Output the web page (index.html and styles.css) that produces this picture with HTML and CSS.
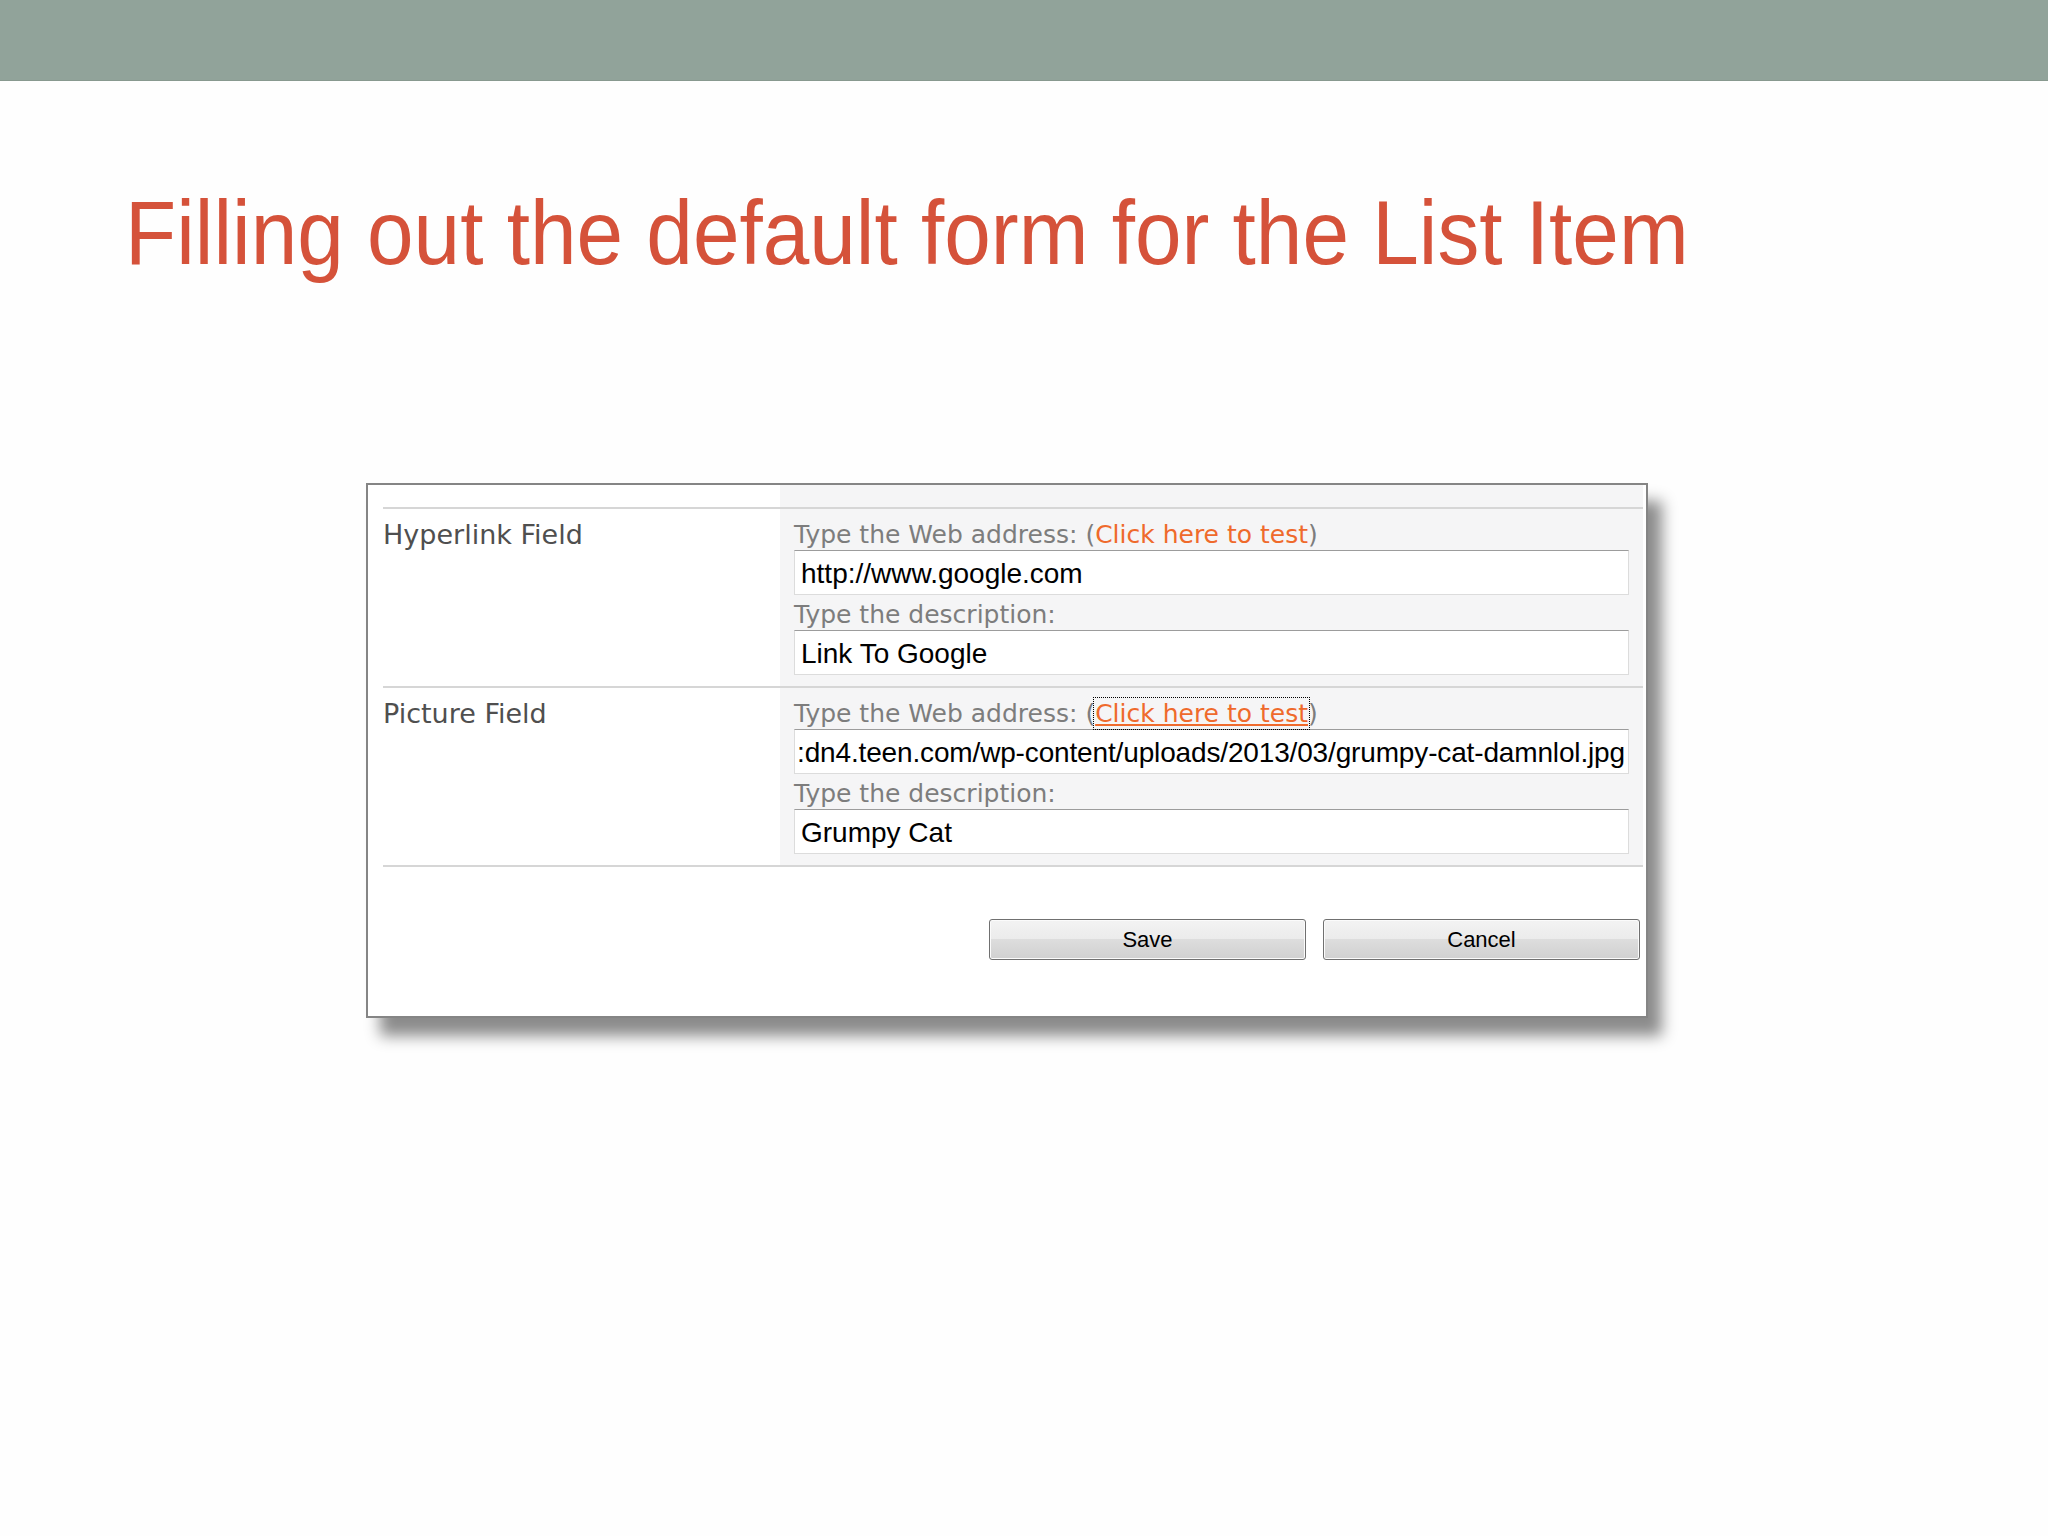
FILE: index.html
```html
<!DOCTYPE html>
<html lang="en">
<head>
   <meta charset="UTF-8">
   <title>Filling out the default form for the List Item</title>
   <link rel="stylesheet" href="styles.css">
</head>
<body>
   <div class="topbar"></div>
   <h1 class="title">Filling out the default form for the List Item</h1>

   <div class="shot">
      <div class="form">
         <div class="form-head">
            <div></div>
            <div class="field-body"></div>
         </div>
         <div class="field-row">
            <div class="field-name">Hyperlink Field</div>
            <div class="field-body">
               <div class="hint">Type the Web address: (<a class="test-link">Click here to test</a>)</div>
               <input class="text-box" type="text" value="http://www.google.com">
               <div class="hint second">Type the description:</div>
               <input class="text-box" type="text" value="Link To Google">
            </div>
         </div>
         <div class="field-row">
            <div class="field-name">Picture Field</div>
            <div class="field-body">
               <div class="hint">Type the Web address: (<a class="test-link focused">Click here to test</a>)</div>
               <input class="text-box scrolled" type="text" value=":dn4.teen.com/wp-content/uploads/2013/03/grumpy-cat-damnlol.jpg">
               <div class="hint second">Type the description:</div>
               <input class="text-box" type="text" value="Grumpy Cat">
            </div>
         </div>
      </div>
      <div class="actions">
         <button>Save</button>
         <button>Cancel</button>
      </div>
   </div>
</body>
</html>
```
FILE: styles.css
```css
body {
   margin: 0;
   min-height: 100vh;
   background: #fefefe;
   font-family: "Liberation Sans", Arial, sans-serif;
}
.topbar {
   height: 80px;
   background: #91a39a;
   border-bottom: 1px solid #88998f;
}
.title {
   margin: 106px 0 0;
   padding-left: 136px;
   height: 91px;
   font-size: 91px;
   line-height: 91px;
   font-weight: normal;
   color: #d5523a;
   white-space: nowrap;
   transform: scaleX(0.92);
   transform-origin: left center;
}
.shot {
   width: 1278px;
   margin: 205px 0 120px 366px;
   background: #fff;
   border: 2px solid #858585;
   box-shadow: 14px 18px 14px 0 rgba(0, 0, 0, 0.45);
}
.form {
   margin: 0 3px 0 15px;
   border-bottom: 2px solid #d6d6d6;
}
.form-head {
   display: grid;
   grid-template-columns: 397px 1fr;
   height: 22px;
}
.field-row {
   display: grid;
   grid-template-columns: 397px 1fr;
   border-top: 2px solid #d6d6d6;
}
.field-name {
   padding-top: 11px;
   font-family: "DejaVu Sans", Verdana, sans-serif;
   font-size: 27px;
   line-height: 30px;
   color: #4f4f4f;
}
.field-body {
   background: #f5f5f6;
   padding: 11px 14px;
}
.form-head .field-body {
   padding: 0;
}
.hint {
   font-family: "DejaVu Sans", Verdana, sans-serif;
   font-size: 25px;
   line-height: 30px;
   color: #7d7d7d;
   white-space: nowrap;
}
.hint.second {
   margin-top: 5px;
}
.test-link {
   color: #ef6a2c;
}
.test-link.focused {
   text-decoration: underline;
   outline: 1px dotted #000;
   outline-offset: 1px;
}
.text-box {
   display: block;
   box-sizing: border-box;
   width: 100%;
   height: 45px;
   margin: 0;
   padding: 2px 6px 0;
   background: #fff;
   border: 1px solid #dcdcdc;
   border-top-color: #9c9c9c;
   font-family: "Liberation Sans", Arial, sans-serif;
   font-size: 28px;
   color: #000;
   outline: none;
}
.text-box.scrolled {
   padding: 2px 2px 0;
   letter-spacing: -0.15px;
}
.actions {
   display: flex;
   justify-content: flex-end;
   gap: 17px;
   padding: 52px 6px 56px 0;
}
.actions button {
   width: 317px;
   height: 41px;
   border: 1px solid #707070;
   border-radius: 3px;
   background: linear-gradient(#f3f3f3, #ebebeb 50%, #dddddd 50%, #d0d0d0);
   box-shadow: inset 0 0 0 1px #fbfbfb;
   font-family: "Liberation Sans", Tahoma, sans-serif;
   font-size: 22px;
   color: #000;
   padding: 0;
}
```
